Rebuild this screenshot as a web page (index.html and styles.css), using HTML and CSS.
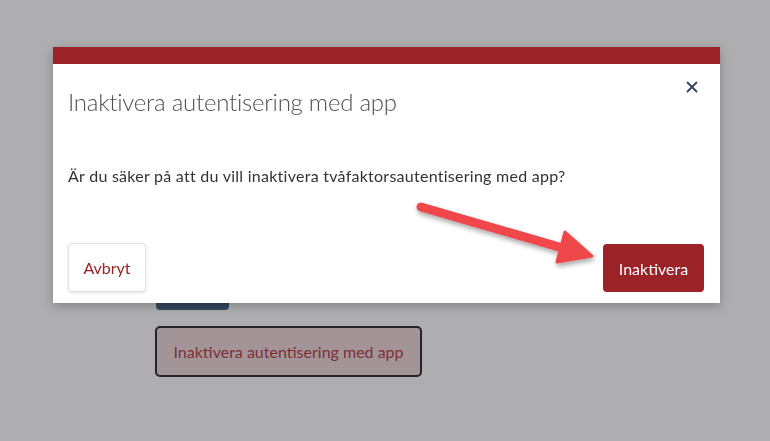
FILE: index.html
```html
<!DOCTYPE html>
<html lang="sv">
<head>
    <meta charset="UTF-8">
    <meta name="viewport" content="width=device-width, initial-scale=1.0">
    <title>Inaktivera autentisering med app</title>
    <link rel="stylesheet" href="styles.css">
</head>
<body>
    <div class="page">
        <button class="btn-dark" type="button">Spara</button>
        <button class="btn-outline" type="button">Inaktivera autentisering med app</button>
    </div>

    <div class="overlay">
        <div class="modal">
            <div class="modal-bar"></div>
            <div class="modal-header">
                <h1 class="modal-title">Inaktivera autentisering med app</h1>
                <button class="close-btn" type="button" aria-label="Stäng">
                    <svg width="12" height="12" viewBox="0 0 12 12">
                        <path d="M1.5 1.5 L10.5 10.5 M10.5 1.5 L1.5 10.5" stroke="#2d4260" stroke-width="1.8" stroke-linecap="round"/>
                    </svg>
                </button>
            </div>
            <div class="modal-body">
                <p>Är du säker på att du vill inaktivera tvåfaktorsautentisering med app?</p>
            </div>
            <div class="modal-footer">
                <button class="cancel-btn" type="button">Avbryt</button>
                <button class="confirm-btn" type="button">Inaktivera</button>
            </div>
        </div>

        <!-- pil som pekar på knappen -->
        <svg class="arrow" width="770" height="441" viewBox="0 0 770 441">
            <defs>
                <filter id="shadow" x="-20%" y="-20%" width="140%" height="160%">
                    <feDropShadow dx="1" dy="3" stdDeviation="2.5" flood-color="#000" flood-opacity="0.35"/>
                </filter>
            </defs>
            <g filter="url(#shadow)" fill="#f0464b">
                <line x1="421" y1="207" x2="566" y2="249" stroke="#f0464b" stroke-width="9" stroke-linecap="round"/>
                <path d="M565 232 L592 256 L557 262 Z" stroke="#f0464b" stroke-width="3" stroke-linejoin="round"/>
            </g>
        </svg>
    </div>
</body>
</html>
```

FILE: styles.css
```css
body {
    margin: 0;
    padding: 0;
    background-color: #aeaeb0;
    font-family: 'Lato', 'Noto Sans', sans-serif;
    width: 770px;
    height: 441px;
    overflow: hidden;
}

.page {
    display: flex;
    flex-direction: column;
    align-items: flex-start;
    padding: 270px 0 0 155px;
    gap: 16px;
}

.btn-dark {
    width: 73px;
    height: 40px;
    margin-left: 1px;
    background-color: #34485f;
    color: #34485f;
    border: none;
    border-radius: 4px;
}

.btn-outline {
    width: 267px;
    height: 51px;
    background-color: #a39597;
    border: 2px solid #23252a;
    border-radius: 5px;
    color: #7d2d37;
    font-family: inherit;
    font-size: 16px;
}

.overlay {
    position: fixed;
    inset: 0;
}

.modal {
    width: 667px;
    margin: 47px 0 0 53px;
    background-color: white;
    box-shadow: 0 3px 10px rgba(0, 0, 0, 0.25);
}

.modal-bar {
    height: 17px;
    background-color: #9b2226;
}

.modal-header {
    display: flex;
    justify-content: space-between;
    align-items: flex-start;
    padding: 22px 22px 0 15px;
}

.modal-title {
    margin: 0;
    font-size: 24px;
    font-weight: 300;
    line-height: 32px;
    letter-spacing: -0.25px;
    color: #505050;
}

.close-btn {
    background: none;
    border: none;
    padding: 0;
    margin-top: -5px;
    cursor: pointer;
    display: flex;
}

.modal-body {
    padding: 46px 15px 0;
}

.modal-body p {
    margin: 0;
    font-size: 16px;
    line-height: 24px;
    letter-spacing: 0.26px;
    color: #333;
}

.modal-footer {
    display: flex;
    justify-content: space-between;
    padding: 55px 16px 11px 15px;
}

.cancel-btn {
    width: 78px;
    height: 49px;
    background-color: white;
    border: 1px solid #e2e2e2;
    border-radius: 4px;
    box-shadow: 0 1px 3px rgba(0, 0, 0, 0.12);
    color: #9b2226;
    font-family: inherit;
    font-size: 16px;
    cursor: pointer;
}

.confirm-btn {
    width: 101px;
    height: 48px;
    margin-top: 1px;
    background-color: #9b2226;
    border: none;
    border-radius: 4px;
    color: white;
    font-family: inherit;
    font-size: 16px;
    cursor: pointer;
}

.arrow {
    position: absolute;
    left: 0;
    top: 0;
    pointer-events: none;
}
```
